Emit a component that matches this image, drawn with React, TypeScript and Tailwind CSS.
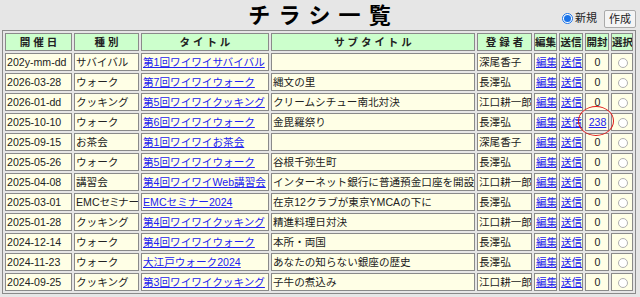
import React from "react";

interface Flyer {
  date: string;
  kind: string;
  title: string;
  sub: string;
  author: string;
  opened: string;
}

const flyers: Flyer[] = [
  { date: "202y-mm-dd", kind: "サバイバル", title: "第1回ワイワイサバイバル", sub: "", author: "深尾香子", opened: "0" },
  { date: "2026-03-28", kind: "ウォーク", title: "第7回ワイワイウォーク", sub: "縄文の里", author: "長澤弘", opened: "0" },
  { date: "2026-01-dd", kind: "クッキング", title: "第5回ワイワイクッキング", sub: "クリームシチュー南北対決", author: "江口耕一郎", opened: "0" },
  { date: "2025-10-10", kind: "ウォーク", title: "第6回ワイワイウォーク", sub: "金毘羅祭り", author: "長澤弘", opened: "238" },
  { date: "2025-09-15", kind: "お茶会", title: "第1回ワイワイお茶会", sub: "", author: "深尾香子", opened: "0" },
  { date: "2025-05-26", kind: "ウォーク", title: "第5回ワイワイウォーク", sub: "谷根千弥生町", author: "長澤弘", opened: "0" },
  { date: "2025-04-08", kind: "講習会", title: "第4回ワイワイWeb講習会", sub: "インターネット銀行に普通預金口座を開設", author: "江口耕一郎", opened: "0" },
  { date: "2025-03-01", kind: "EMCセミナー", title: "EMCセミナー2024", sub: "在京12クラブが東京YMCAの下に", author: "長澤弘", opened: "0" },
  { date: "2025-01-28", kind: "クッキング", title: "第4回ワイワイクッキング", sub: "精進料理日対決", author: "江口耕一郎", opened: "0" },
  { date: "2024-12-14", kind: "ウォーク", title: "第4回ワイワイウォーク", sub: "本所・両国", author: "長澤弘", opened: "0" },
  { date: "2024-11-23", kind: "ウォーク", title: "大江戸ウォーク2024", sub: "あなたの知らない銀座の歴史", author: "長澤弘", opened: "0" },
  { date: "2024-09-25", kind: "クッキング", title: "第3回ワイワイクッキング", sub: "子牛の煮込み", author: "江口耕一郎", opened: "0" },
];

const th = "border border-[#8a8a8a] bg-[#ccffcc] font-bold text-[10.5px] leading-[16px] text-center p-0 h-[18px] whitespace-nowrap overflow-hidden";
const td = "border border-[#8a8a8a] bg-[#ffffe6] text-[10.6px] leading-[16px] p-0 pl-[1px] h-[18px] whitespace-nowrap overflow-hidden";
const link = "text-[#2323f0] underline";

export default function App() {
  return (
    <div
      className="w-[640px] h-[297px] bg-[#e6e6e6] text-[#222] overflow-hidden"
      style={{ fontFamily: '"Liberation Sans", "Noto Sans CJK JP", sans-serif' }}
    >
      <div className="grid grid-cols-[1fr_auto_1fr] h-[30px]">
        <div />
        <h1 className="text-[22px] font-bold text-black leading-[30px] pt-[1px] tracking-[1px]">チ ラ シ 一 覧</h1>
        <div className="flex items-center justify-end gap-[7px] pr-[4px] pt-[6px]">
          <label className="flex items-center gap-[2px] text-[11px]">
            <span className="w-[11px] h-[11px] rounded-full border border-[#1a73e8] bg-white flex items-center justify-center">
              <span className="w-[7px] h-[7px] rounded-full bg-[#1a73e8]" />
            </span>
            新規
          </label>
          <button className="border border-[#aaa] bg-[#f4f4f4] text-[11px] px-[4px] h-[18px] rounded-[2px]">作成</button>
        </div>
      </div>

      <table className="ml-[2px] border border-[#8a8a8a] border-separate border-spacing-[2px] table-fixed w-[634px]">
        <thead>
          <tr>
            <th className={`${th} w-[67px]`}>開 催 日</th>
            <th className={`${th} w-[65px]`}>種 別</th>
            <th className={`${th} w-[128px]`}>タ イ ト ル</th>
            <th className={`${th} w-[204px]`}>サ ブ タ イ ト ル</th>
            <th className={`${th} w-[55px]`}>登 録 者</th>
            <th className={`${th} w-[23px]`}>編集</th>
            <th className={`${th} w-[24px]`}>送信</th>
            <th className={`${th} w-[24px]`}>開封</th>
            <th className={`${th} w-[22px]`}>選択</th>
          </tr>
        </thead>
        <tbody>
          {flyers.map((f) => (
            <tr key={f.date + f.title}>
              <td className={td}>{f.date}</td>
              <td className={td} style={f.kind.length > 6 ? { fontFeatureSettings: '"palt"' } : undefined}>
                {f.kind}
              </td>
              <td className={td}>
                <a className={link}>{f.title}</a>
              </td>
              <td className={td}>{f.sub}</td>
              <td className={td}>{f.author}</td>
              <td className={`${td} text-center`}>
                <a className={link}>編集</a>
              </td>
              <td className={`${td} text-center`}>
                <a className={link}>送信</a>
              </td>
              <td className={`${td} text-center`}>
                {f.opened === "0" ? "0" : <a className={link}>{f.opened}</a>}
              </td>
              <td className={`${td} text-center`}>
                <span className="inline-block align-middle w-[10px] h-[10px] rounded-full border border-[#b0b0b0] bg-white" />
              </td>
            </tr>
          ))}
        </tbody>
      </table>

      {/* hand-drawn annotation over the 開封 count */}
      <span className="absolute left-[578px] top-[106px] w-[36px] h-[30px] rounded-[50%] border border-[#e01818] pointer-events-none" />
    </div>
  );
}
